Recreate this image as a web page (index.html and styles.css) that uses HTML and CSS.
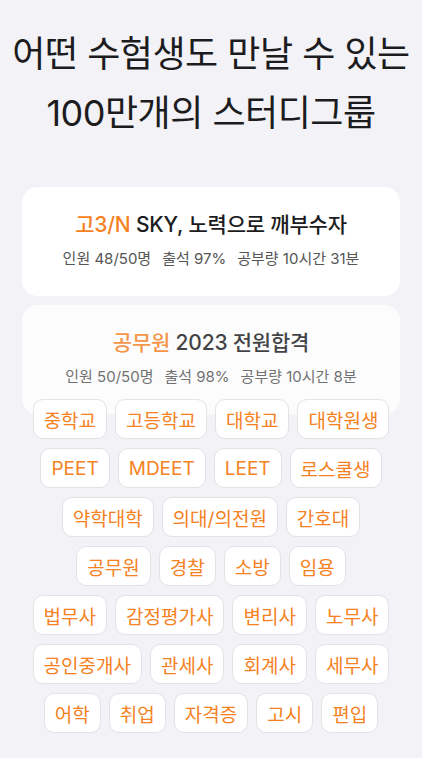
FILE: index.html
```html
<!DOCTYPE html>
<html lang="ko">
<head>
  <meta charset="UTF-8" />
  <meta name="viewport" content="width=device-width, initial-scale=1.0"/>
  <title>스터디그룹</title>
  <link rel="stylesheet" href="styles.css">
</head>
<body>

  <h1 class="headline">어떤 수험생도 만날 수 있는<br>100만개의 스터디그룹</h1>

  <div class="groups">
    <div class="group">
      <div class="group-title"><span class="accent">고3/N</span> SKY, 노력으로 깨부수자</div>
      <div class="group-stats">
        <span>인원 48/50명</span>
        <span>출석 97%</span>
        <span>공부량 10시간 31분</span>
      </div>
    </div>
    <div class="group faded">
      <div class="group-title"><span class="accent">공무원</span> 2023 전원합격</div>
      <div class="group-stats">
        <span>인원 50/50명</span>
        <span>출석 98%</span>
        <span>공부량 10시간 8분</span>
      </div>
    </div>
  </div>

  <div class="tags">
    <div class="tag-row">
      <span class="tag">중학교</span>
      <span class="tag">고등학교</span>
      <span class="tag">대학교</span>
      <span class="tag">대학원생</span>
    </div>
    <div class="tag-row">
      <span class="tag">PEET</span>
      <span class="tag">MDEET</span>
      <span class="tag">LEET</span>
      <span class="tag">로스쿨생</span>
    </div>
    <div class="tag-row">
      <span class="tag">약학대학</span>
      <span class="tag">의대/의전원</span>
      <span class="tag">간호대</span>
    </div>
    <div class="tag-row">
      <span class="tag">공무원</span>
      <span class="tag">경찰</span>
      <span class="tag">소방</span>
      <span class="tag">임용</span>
    </div>
    <div class="tag-row">
      <span class="tag">법무사</span>
      <span class="tag">감정평가사</span>
      <span class="tag">변리사</span>
      <span class="tag">노무사</span>
    </div>
    <div class="tag-row">
      <span class="tag">공인중개사</span>
      <span class="tag">관세사</span>
      <span class="tag">회계사</span>
      <span class="tag">세무사</span>
    </div>
    <div class="tag-row">
      <span class="tag">어학</span>
      <span class="tag">취업</span>
      <span class="tag">자격증</span>
      <span class="tag">고시</span>
      <span class="tag">편입</span>
    </div>
  </div>

</body>
</html>
```

FILE: styles.css
```css
body {
  margin: 0;
  font-family: Inter, "Noto Sans CJK KR", sans-serif;
  background-color: #f2f2f7;
  color: #1c1c1e;
}

.headline {
  margin: 0;
  padding-top: 25px;
  font-size: 36px;
  font-weight: 400;
  line-height: 59px;
  text-align: center;
  letter-spacing: -0.5px;
}

.groups {
  margin: 44px 22px 0;
  display: flex;
  flex-direction: column;
  gap: 9px;
}

.group {
  background: white;
  border-radius: 15px;
  padding: 24px 0 27px;
  text-align: center;
}

.group.faded {
  opacity: 0.82;
}

.group-title {
  font-size: 21px;
  font-weight: 500;
  line-height: 28px;
  letter-spacing: -0.2px;
}

.accent {
  color: #f5821f;
}

.group-stats {
  margin-top: 10px;
  font-size: 15px;
  line-height: 20px;
  color: #555;
  display: flex;
  justify-content: center;
  gap: 11px;
}

.tags {
  position: relative;
  margin-top: -15px;
  display: flex;
  flex-direction: column;
  gap: 9px;
}

.tag-row {
  display: flex;
  justify-content: center;
  gap: 8px;
}

.tag {
  height: 40px;
  box-sizing: border-box;
  padding: 0 10px;
  display: flex;
  align-items: center;
  background: white;
  border: 1px solid #e2e2e7;
  border-radius: 10px;
  color: #f5821f;
  font-size: 19px;
}
```
